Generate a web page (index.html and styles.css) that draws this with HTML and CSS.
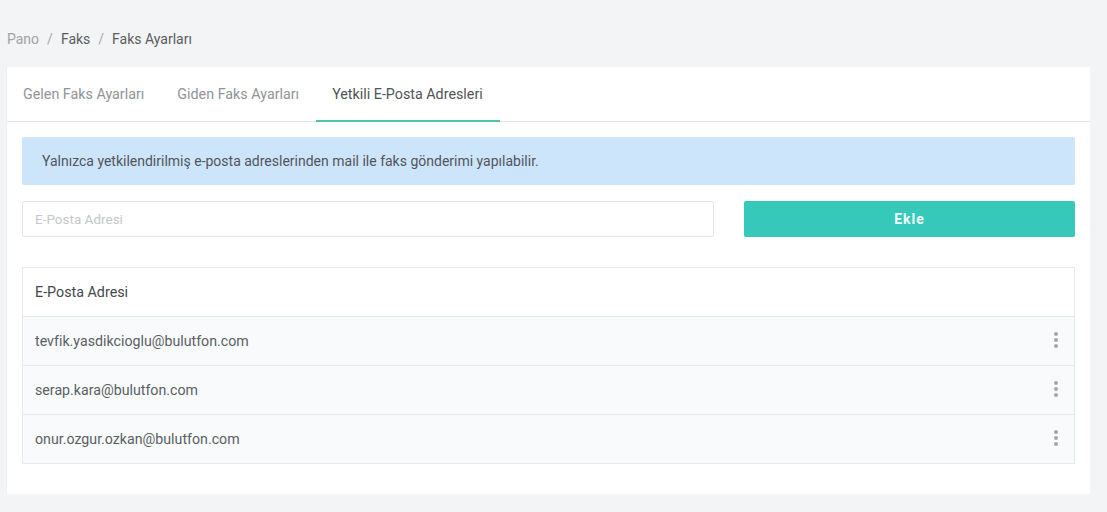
FILE: index.html
```html
<!DOCTYPE html>
<html lang="tr">
<head>
<meta charset="utf-8">
<title>Faks Ayarları</title>
<link rel="stylesheet" href="styles.css">
</head>
<body>
<nav class="breadcrumb">
  <span class="crumb muted">Pano</span>
  <span class="sep">/</span>
  <span class="crumb">Faks</span>
  <span class="sep">/</span>
  <span class="crumb">Faks Ayarları</span>
</nav>
<main class="card">
  <div class="tabs">
    <div class="tab">Gelen Faks Ayarları</div>
    <div class="tab">Giden Faks Ayarları</div>
    <div class="tab active">Yetkili E-Posta Adresleri</div>
  </div>
  <div class="card-body">
    <div class="alert">Yalnızca yetkilendirilmiş e-posta adreslerinden mail ile faks gönderimi yapılabilir.</div>
    <div class="form-row">
      <input class="input" type="text" placeholder="E-Posta Adresi">
      <button class="btn">Ekle</button>
    </div>
    <div class="table">
      <div class="thead">E-Posta Adresi</div>
      <div class="trow"><span>tevfik.yasdikcioglu@bulutfon.com</span><span class="kebab"><i></i><i></i><i></i></span></div>
      <div class="trow"><span>serap.kara@bulutfon.com</span><span class="kebab"><i></i><i></i><i></i></span></div>
      <div class="trow"><span>onur.ozgur.ozkan@bulutfon.com</span><span class="kebab"><i></i><i></i><i></i></span></div>
    </div>
  </div>
</main>
</body>
</html>
```
FILE: styles.css
```css
* { box-sizing: border-box; }
body {
  margin: 0;
  background: #f3f4f6;
  font-family: Roboto, "Liberation Sans", sans-serif;
  font-size: 14px;
  color: #444;
  height: 512px;
}
.breadcrumb {
  display: flex;
  align-items: flex-start;
  gap: 8px;
  padding: 30px 0 0 7px;
  height: 67px;
  line-height: 18px;
  color: #5a5d61;
  font-size: 14px;
}
.breadcrumb .muted { color: #a0a3a8; }
.breadcrumb .sep { color: #a6a9ad; }
.card {
  margin-left: 6px;
  width: 1084px;
  height: 427px;
  background: #fff;
  border-left: 1px solid #eef0f2;
}
.tabs {
  display: flex;
  height: 55px;
  border-bottom: 1px solid #e4e6e8;
}
.tab {
  padding: 0 17px 0 16px;
  display: flex;
  align-items: center;
  color: #909398;
  font-size: 14.3px;
  border-bottom: 2px solid transparent;
  margin-bottom: -1px;
}
.tab.active {
  color: #505357;
  border-bottom-color: #4cc2b2;
}
.card-body {
  padding: 15px 15px 30px 15px;
}
.alert {
  height: 48px;
  background: #cde5fb;
  border-radius: 2px;
  padding: 0 20px;
  display: flex;
  align-items: center;
  color: #50555b;
  font-size: 14px;
}
.form-row {
  display: grid;
  grid-template-columns: 692px 331px;
  gap: 30px;
  margin-top: 16px;
}
.input {
  height: 36px;
  border: 1px solid #e4e7ea;
  border-radius: 2px;
  padding: 0 12px;
  font-family: inherit;
  font-size: 13.5px;
  color: #444;
  outline: none;
}
.input::placeholder { color: #c4c7cb; }
.btn {
  height: 36px;
  border: none;
  border-radius: 2px;
  background: #36c9b9;
  color: #f0fffc;
  font-family: inherit;
  font-weight: 700;
  font-size: 14px;
  letter-spacing: 1px;
}
.table {
  margin-top: 30px;
  border: 1px solid #e8ebee;
}
.thead {
  height: 48px;
  display: flex;
  align-items: center;
  padding: 0 12px;
  color: #45484c;
  font-size: 14.3px;
}
.trow {
  height: 49px;
  display: flex;
  align-items: center;
  justify-content: space-between;
  padding: 0 12px;
  background: #f8fafc;
  border-top: 1px solid #e6e9ec;
  color: #5a5e63;
  font-size: 14.2px;
}
.kebab {
  display: flex;
  flex-direction: column;
  gap: 2px;
  margin-right: 4px;
  margin-top: -2px;
}
.kebab i {
  display: block;
  width: 4px;
  height: 4px;
  border-radius: 50%;
  background: #a3a6aa;
}
```
